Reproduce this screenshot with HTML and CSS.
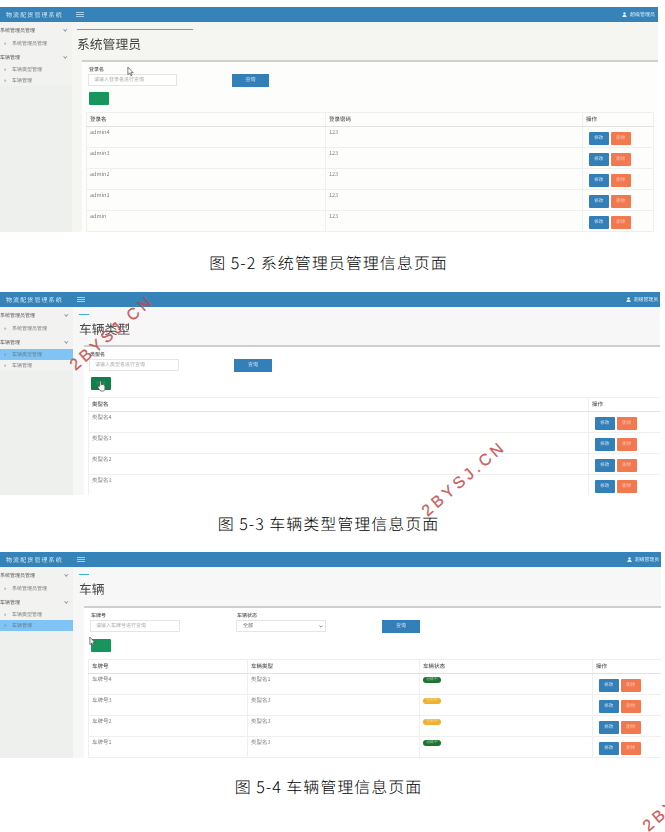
FILE: index.html
```html
<!DOCTYPE html>
<html lang="zh-CN">
<head>
<meta charset="utf-8">
<title>物流配货管理系统</title>
<link rel="stylesheet" href="styles.css">
</head>
<body>
<section class="shot shot-a">
  <header class="topbar">
    <div class="brand">物流配货管理系统</div>
    <div class="burger"><i></i><i></i><i></i></div>
    <div class="user"><svg class="user-icon" viewBox="0 0 10 10"><circle cx="5" cy="3" r="2.4"/><path d="M0.5 10 C1 6.5 3 6 5 6 S9 6.500 9.500 10Z"/></svg>超级管理员</div>
  </header>
  <div class="body">
    <aside class="side">
      <div class="menu">
        <div class="sec"><span>系统管理员管理</span><b></b></div>
        <div class="item first"><em>»</em>系统管理员管理</div>
        <div class="sec"><span>车辆管理</span><b></b></div>
        <div class="item"><em>»</em>车辆类型管理</div>
        <div class="item"><em>»</em>车辆管理</div>
      </div>
    </aside>
    <main class="main">
      <div class="head"><div class="tab"></div><h1>系统管理员</h1></div>
      <div class="box">
        <div class="search">
          <div class="field"><label>登录名</label><div class="input">请输入登录名进行查询</div></div>
          <div class="query">查询</div>
        </div>
        <div class="add">新增</div>
        <table class="grid">
          <colgroup><col class="c1"><col><col class="cop"></colgroup>
          <thead><tr><th>登录名</th><th>登录密码</th><th>操作</th></tr></thead>
          <tbody>
            <tr><td>admin4</td><td>123</td><td><span class="btn edit">修改</span><span class="btn del">删除</span></td></tr>
            <tr><td>admin3</td><td>123</td><td><span class="btn edit">修改</span><span class="btn del">删除</span></td></tr>
            <tr><td>admin2</td><td>123</td><td><span class="btn edit">修改</span><span class="btn del">删除</span></td></tr>
            <tr><td>admin1</td><td>123</td><td><span class="btn edit">修改</span><span class="btn del">删除</span></td></tr>
            <tr><td>admin</td><td>123</td><td><span class="btn edit">修改</span><span class="btn del">删除</span></td></tr>
          </tbody>
        </table>
      </div>
    </main>
  </div>
</section>
<p class="caption cap-a">图 5-2 系统管理员管理信息页面</p>

<section class="shot shot-b">
  <header class="topbar">
    <div class="brand">物流配货管理系统</div>
    <div class="burger"><i></i><i></i><i></i></div>
    <div class="user"><svg class="user-icon" viewBox="0 0 10 10"><circle cx="5" cy="3" r="2.4"/><path d="M0.5 10 C1 6.5 3 6 5 6 S9 6.500 9.500 10Z"/></svg>超级管理员</div>
  </header>
  <div class="body">
    <aside class="side">
      <div class="menu">
        <div class="sec"><span>系统管理员管理</span><b></b></div>
        <div class="item first"><em>»</em>系统管理员管理</div>
        <div class="sec"><span>车辆管理</span><b></b></div>
        <div class="item active"><em>»</em>车辆类型管理</div>
        <div class="item"><em>»</em>车辆管理</div>
      </div>
    </aside>
    <main class="main">
      <div class="head"><div class="tab"></div><h1>车辆类型</h1></div>
      <div class="box">
        <div class="search">
          <div class="field"><label>类型名</label><div class="input">请输入类型名进行查询</div></div>
          <div class="query">查询</div>
        </div>
        <div class="add dark">新增</div>
        <table class="grid">
          <colgroup><col><col class="cop"></colgroup>
          <thead><tr><th>类型名</th><th>操作</th></tr></thead>
          <tbody>
            <tr><td>类型名4</td><td><span class="btn edit">修改</span><span class="btn del">删除</span></td></tr>
            <tr><td>类型名3</td><td><span class="btn edit">修改</span><span class="btn del">删除</span></td></tr>
            <tr><td>类型名2</td><td><span class="btn edit">修改</span><span class="btn del">删除</span></td></tr>
            <tr><td>类型名1</td><td><span class="btn edit">修改</span><span class="btn del">删除</span></td></tr>
          </tbody>
        </table>
      </div>
    </main>
  </div>
</section>
<p class="caption cap-b">图 5-3 车辆类型管理信息页面</p>

<section class="shot shot-c">
  <header class="topbar">
    <div class="brand">物流配货管理系统</div>
    <div class="burger"><i></i><i></i><i></i></div>
    <div class="user"><svg class="user-icon" viewBox="0 0 10 10"><circle cx="5" cy="3" r="2.4"/><path d="M0.5 10 C1 6.5 3 6 5 6 S9 6.500 9.500 10Z"/></svg>超级管理员</div>
  </header>
  <div class="body">
    <aside class="side">
      <div class="menu">
        <div class="sec"><span>系统管理员管理</span><b></b></div>
        <div class="item first"><em>»</em>系统管理员管理</div>
        <div class="sec"><span>车辆管理</span><b></b></div>
        <div class="item"><em>»</em>车辆类型管理</div>
        <div class="item active"><em>»</em>车辆管理</div>
      </div>
    </aside>
    <main class="main">
      <div class="head"><div class="tab"></div><h1>车辆</h1></div>
      <div class="box">
        <div class="search">
          <div class="field"><label>车牌号</label><div class="input">请输入车牌号进行查询</div></div>
          <div class="field status"><label>车辆状态</label><div class="input select">全部<svg class="caret" viewBox="0 0 6 4"><path d="M0.500 0.500 L3 3 L5.500 0.500"/></svg></div></div>
          <div class="query">查询</div>
        </div>
        <div class="add">新增</div>
        <table class="grid">
          <colgroup><col class="v1"><col class="v2"><col class="v3"><col class="cop"></colgroup>
          <thead><tr><th>车牌号</th><th>车辆类型</th><th>车辆状态</th><th>操作</th></tr></thead>
          <tbody>
            <tr><td>车牌号4</td><td>类型名1</td><td><span class="badge busy">运输中</span></td><td><span class="btn edit">修改</span><span class="btn del">删除</span></td></tr>
            <tr><td>车牌号3</td><td>类型名3</td><td><span class="badge idle">空闲中</span></td><td><span class="btn edit">修改</span><span class="btn del">删除</span></td></tr>
            <tr><td>车牌号2</td><td>类型名3</td><td><span class="badge idle">空闲中</span></td><td><span class="btn edit">修改</span><span class="btn del">删除</span></td></tr>
            <tr><td>车牌号1</td><td>类型名3</td><td><span class="badge busy">运输中</span></td><td><span class="btn edit">修改</span><span class="btn del">删除</span></td></tr>
          </tbody>
        </table>
      </div>
    </main>
  </div>
</section>
<p class="caption cap-c">图 5-4 车辆管理信息页面</p>

<svg class="cursor cur-a" viewBox="0 0 8 12"><path d="M1 1 L1 9.500 L3 7.800 L4.400 10.800 L5.800 10.200 L4.400 7.300 L7 7.300Z"/></svg>
<svg class="cursor cur-c" viewBox="0 0 8 12"><path d="M1 1 L1 9.500 L3 7.800 L4.400 10.800 L5.800 10.200 L4.400 7.300 L7 7.300Z"/></svg>
<svg class="cursor cur-hand" viewBox="0 0 10 13"><path d="M3 6.500 V1.700 C3 0.500 4.600 0.500 4.600 1.700 V5 C6 4.600 8.800 5 8.800 6.500 V9.500 C8.800 11 8 12 7 12 H4.500 C3.500 12 3 11.300 2.500 10.500 L1 8 C0.600 7 1.800 6.300 2.500 7Z"/></svg>

<div class="mark mark-a">2BYSJ.CN</div>
<div class="mark mark-b">2BYSJ.CN</div>
<div class="mark mark-c">2BYSJ.CN</div>
</body>
</html>
```

FILE: styles.css
```css
* { box-sizing: border-box; }
html, body { margin: 0; padding: 0; }
body {
  position: relative;
  width: 665px;
  height: 832px;
  overflow: hidden;
  background: #fff;
  padding-top: 7px;
  font-family: "Noto Sans CJK SC", "Liberation Sans", sans-serif;
  color: #555;
  text-rendering: geometricPrecision;
}

.shot {
  --side: 72px;
  --gutter: 10px;
  overflow: hidden;
  filter: blur(0.45px);
  background: #fff;
}
.shot-a { width: 658px; height: 225px; }
.shot-b { width: 660px; height: 203px; --side: 73px; --gutter: 11px; }
.shot-c { width: 661px; height: 206px; --side: 73px; --gutter: 11px; }

.topbar {
  display: flex;
  align-items: center;
  height: 15px;
  background: #3583b8;
  color: #dcebf5;
  font-size: 5px;
}
.brand {
  width: var(--side);
  padding-left: 6px;
  font-size: 6px;
  letter-spacing: 1.1px;
  color: #d8e8f2;
  white-space: nowrap;
}
.burger { display: flex; flex-direction: column; gap: 1px; margin-left: 4px; width: 8px; }
.burger i { display: block; height: 1px; background: #a9cde4; }
.user { margin-left: auto; padding-right: 3px; display: flex; align-items: center; gap: 3px; white-space: nowrap; }
.shot-b .user { padding-right: 2px; font-size: 4.800px; }
.shot-c .user { padding-right: 2px; font-size: 4.800px; }
.user-icon { width: 5px; height: 5px; fill: #e4eff7; }

.body { display: flex; height: calc(100% - 15px); }
.side { flex: 0 0 var(--side); background: #eef0ee; }
.menu { background: #f2f3f0; padding-top: 1px; }
.sec {
  display: flex;
  justify-content: space-between;
  align-items: center;
  height: 14px;
  padding-right: 6px;
  font-size: 5px;
  color: #555;
  white-space: nowrap;
}
.sec b {
  display: block;
  width: 2.500px;
  height: 2.500px;
  margin-bottom: 1px;
  border-right: 0.700px solid #999;
  border-bottom: 0.700px solid #999;
  transform: rotate(45deg);
}
.item {
  display: flex;
  align-items: center;
  height: 11px;
  padding-left: 4px;
  font-size: 5px;
  color: #7d7d7d;
  white-space: nowrap;
}
.item.first { height: 13px; }
.item em { font-style: normal; width: 8px; color: #777; }
.item.active { background: #7fc4f4; color: #5f7f95; }

.main { flex: 1; min-width: 0; background: #f5f6f2; display: flex; flex-direction: column; }
.shot-b .main, .shot-c .main { background: #f6f7f6; }
.head { height: 38px; padding: 7px 0 0 5px; flex: none; }
.shot-b .head { padding-left: 6px; }
.shot-c .head { height: 39px; padding-left: 6px; }
.tab { height: 1px; width: 116px; background: #3fb0d6; }
.shot-b .tab, .shot-c .tab { width: 10px; }
h1 { margin: 6px 0 0; font-size: 12.800px; line-height: 15px; font-weight: 400; color: #444; }
.shot-b h1, .shot-c h1 { margin-top: 5.500px; }

.box {
  flex: 1;
  margin-left: var(--gutter);
  border-top: 2px solid #cfd0cd;
  background: #fdfefb;
  padding: 0 4px;
}
.shot-b .box, .shot-c .box { background: #fff; }

.search { display: flex; align-items: flex-start; padding: 5px 0 0 2px; height: 25px; }
.shot-b .search { padding-left: 1px; }
.field { width: 89px; flex: none; }
.shot-b .field, .shot-c .field { width: 90px; }
.field label { display: block; padding-left: 1px; font-size: 5px; line-height: 6px; height: 7px; color: #555; font-weight: 500; }
.input {
  height: 12px;
  border: 1px solid #e4e6e4;
  background: #fff;
  padding-left: 5px;
  font-size: 5px;
  line-height: 10px;
  color: #aaa;
  white-space: nowrap;
}
.shot-c .status { margin-left: 56px; }
.select { display: flex; justify-content: space-between; align-items: center; padding-right: 2px; padding-left: 6px; color: #666; }
.caret { width: 4px; height: 3px; fill: none; stroke: #555; stroke-width: 1; }
.query {
  flex: none;
  width: 37px;
  height: 12.500px;
  margin-top: 7px;
  margin-left: 55px;
  background: #337fb8;
  color: #cfe2f0;
  font-size: 5px;
  line-height: 12px;
  text-align: center;
}
.shot-b .query { width: 38px; }
.shot-c .query { width: 38px; margin-left: 56px; }
.add {
  width: 20px;
  height: 13px;
  margin: 5px 0 0 3px;
  border-radius: 1px;
  background: #13975c;
  color: #3d8a5e;
  font-size: 5px;
  line-height: 13px;
  text-align: center;
}
.add.dark { background: #0f7f4c; }
.shot-c .add { margin-top: 6px; height: 12.500px; }

.grid {
  width: 568px;
  margin-top: 7px;
  border-collapse: collapse;
  table-layout: fixed;
  border: 1px solid #eff0ee;
  font-size: 5.500px;
  background: inherit;
}
.shot-b .grid, .shot-c .grid { width: 580px; }
.shot-c .grid { margin-top: 7.500px; }
.c1 { width: 239px; }
.cop { width: 71px; }
.shot-b .cop { width: 79px; }
.shot-c .cop { width: 76px; }
.v1 { width: 159px; }
.v2 { width: 172px; }
.v3 { width: 173px; }
.grid th {
  height: 13.500px;
  padding: 0 3px;
  border-left: 1px solid #eff0ee;
  border-bottom: 1px solid #e2e3e1;
  text-align: left;
  font-weight: 500;
  color: #555;
  line-height: 6px;
}
.grid td {
  height: 21px;
  padding: 2.500px 3px 0;
  border-left: 1px solid #eff0ee;
  border-bottom: 1px solid #eff0ee;
  vertical-align: top;
  color: #808080;
  line-height: 7px;
}
.btn {
  display: inline-block;
  width: 19.500px;
  height: 13px;
  margin-top: 2.500px;
  margin-right: 2.500px;
  border-radius: 1px;
  color: #cfe0ec;
  font-size: 4.500px;
  line-height: 13px;
  text-align: center;
  vertical-align: top;
}
td:last-child { padding-left: 6px; white-space: nowrap; }
.edit { background: #337fb8; }
.del { background: #f2784f; color: #f6c4b0; }
.badge {
  display: inline-block;
  width: 18px;
  height: 6px;
  margin-top: 1px;
  border-radius: 3px;
  font-size: 3.800px;
  line-height: 6px;
  text-align: center;
  vertical-align: top;
}
.busy { background: #1c7430; color: #9ccaa4; }
.idle { background: #efb02f; color: #f8dfa8; }

.caption {
  width: 657px;
  margin: 0;
  text-align: center;
  font-size: 16px;
  font-weight: 300;
  letter-spacing: 1px;
  color: #000;
  line-height: 20px;
}
.cap-a { padding-top: 20px; height: 60px; }
.cap-b { padding-top: 18px; height: 57px; }
.cap-c { padding-top: 18px; }

.cursor { position: absolute; width: 7px; height: 11px; fill: #fff; stroke: #444; stroke-width: 0.800; }
.cur-a { left: 127px; top: 66px; }
.cur-c { left: 89px; top: 636px; }
.cur-hand { left: 97px; top: 380px; width: 9px; height: 12px; }

.mark {
  position: absolute;
  font-family: "Liberation Sans", sans-serif;
  font-size: 16px;
  letter-spacing: 3.600px;
  line-height: 16px;
  color: rgba(195, 70, 70, 0.85);
  -webkit-text-stroke: 0.300px rgba(195, 70, 70, 0.85);
  white-space: nowrap;
  transform-origin: left center;
  transform: rotate(-41deg);
}
.mark-a { left: 73px; top: 360px; }
.mark-b { left: 425px; top: 506px; }
.mark-c { left: 646px; top: 821px; }
```
